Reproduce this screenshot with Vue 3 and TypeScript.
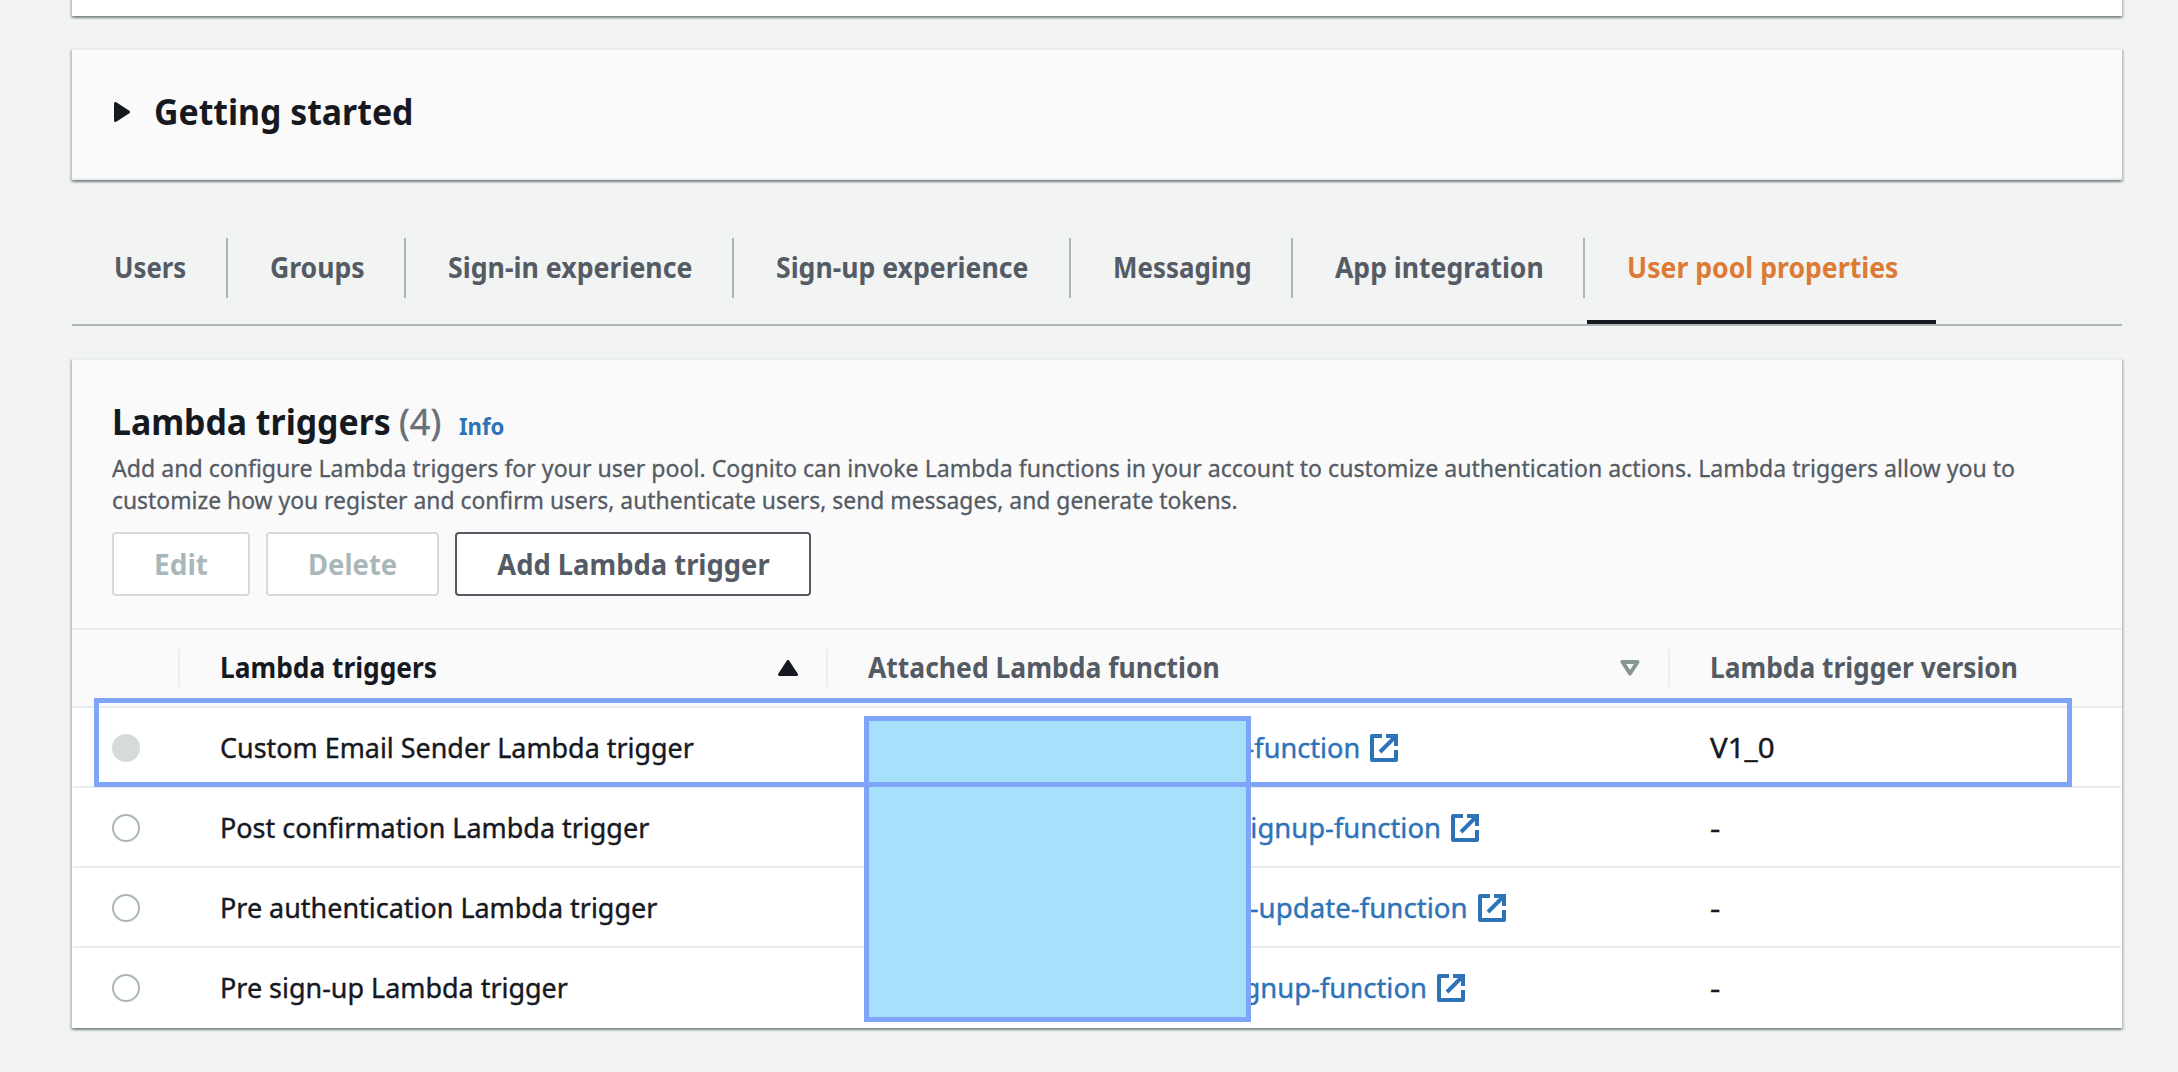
<script setup lang="ts">
interface Tab {
  label: string
  width: number
  fit: number
  active?: boolean
}

interface Trigger {
  name: string
  nameFit: number
  fn: string
  fnFit: number
  fnWidth: number
  version: string
  disabled?: boolean
}

const tabs: Tab[] = [
  { label: 'Users', width: 156, fit: 0.92 },
  { label: 'Groups', width: 178, fit: 0.95 },
  { label: 'Sign-in experience', width: 328, fit: 0.954 },
  { label: 'Sign-up experience', width: 337, fit: 0.95 },
  { label: 'Messaging', width: 222, fit: 0.925 },
  { label: 'App integration', width: 292, fit: 0.948 },
  { label: 'User pool properties', width: 349, fit: 0.951, active: true },
]

const triggers: Trigger[] = [
  { name: 'Custom Email Sender Lambda trigger', nameFit: 0.961, fn: '-function', fnFit: 0.97, fnWidth: 493, version: 'V1_0', disabled: true },
  { name: 'Post confirmation Lambda trigger', nameFit: 0.962, fn: 'signup-function', fnFit: 0.98, fnWidth: 574, version: '-' },
  { name: 'Pre authentication Lambda trigger', nameFit: 0.962, fn: '-update-function', fnFit: 0.988, fnWidth: 601, version: '-' },
  { name: 'Pre sign-up Lambda trigger', nameFit: 0.962, fn: 'signup-function', fnFit: 0.98, fnWidth: 560, version: '-' },
]
</script>

<template>
  <main class="page">
    <section class="card stub"></section>

    <section class="card getting-started">
      <svg class="caret" viewBox="0 0 16 20"><path d="M1.5 1.5V18.5L14.5 10Z" /></svg>
      <h2 class="fit title started-title">Getting started</h2>
    </section>

    <nav class="tabs">
      <a
        v-for="tab in tabs"
        :key="tab.label"
        class="tab"
        :class="{ active: tab.active }"
        :style="{ width: tab.width + 'px' }"
      >
        <span class="fit" :style="{ '--fit': tab.fit }">{{ tab.label }}</span>
      </a>
    </nav>

    <section class="card triggers">
      <header class="head">
        <div class="heading">
          <h2 class="fit title heading-title">Lambda triggers</h2>
          <span class="count">(4)</span>
          <a class="fit info">Info</a>
        </div>
        <p class="desc">
          <span class="fit line-one">Add and configure Lambda triggers for your user pool. Cognito can invoke Lambda functions in your account to customize authentication actions. Lambda triggers allow you to</span>
          <span class="fit line-two">customize how you register and confirm users, authenticate users, send messages, and generate tokens.</span>
        </p>
        <div class="actions">
          <button class="btn edit" disabled><span>Edit</span></button>
          <button class="btn delete" disabled><span>Delete</span></button>
          <button class="btn add"><span>Add Lambda trigger</span></button>
        </div>
      </header>

      <div class="row thead">
        <div class="cell"></div>
        <div class="cell sorted">
          <span class="fit">Lambda triggers</span>
          <svg class="sort" viewBox="0 0 20 16"><path class="solid" d="M10 1.5L18.5 14.5H1.5Z" /></svg>
        </div>
        <div class="cell">
          <span class="fit attached">Attached Lambda function</span>
          <svg class="sort" viewBox="0 0 20 16"><path class="hollow" d="M2.5 2H17.5L10 13.5Z" /></svg>
        </div>
        <div class="cell"><span class="fit">Lambda trigger version</span></div>
      </div>

      <div v-for="t in triggers" :key="t.name" class="row">
        <div class="pick"><span class="radio" :class="{ disabled: t.disabled }"></span></div>
        <div class="value"><span class="fit" :style="{ '--fit': t.nameFit }">{{ t.name }}</span></div>
        <div class="value">
          <a class="link">
            <span class="fn" :style="{ width: t.fnWidth + 'px' }"><span class="fit from-end" :style="{ '--fit': t.fnFit }">{{ t.fn }}</span></span>
            <svg class="external" viewBox="0 0 28 28">
              <path stroke-linejoin="round" d="M12 2H2V26H26V16" />
              <path d="M16 2H26V12M25.5 2.5L10 18" />
            </svg>
          </a>
        </div>
        <div class="value"><span class="fit" :class="{ version: t.version !== '-', dash: t.version === '-' }">{{ t.version }}</span></div>
      </div>

      <div class="redaction"></div>
      <div class="highlight"></div>
    </section>
  </main>
</template>

<style>
body {
  margin: 0;
  background: #f2f3f3;
}
</style>

<style scoped>
.page {
  box-sizing: border-box;
  width: 2178px;
  height: 1072px;
  padding: 0 56px 0 72px;
  overflow: hidden;
  background: #f2f3f3;
  color: #16191f;
  font: 400 28px/32px "Noto Sans", "Open Sans", sans-serif;
}

.card {
  box-sizing: border-box;
  background: #fff;
  border-top: 2px solid #eaeded;
  box-shadow:
    0 2px 2px 0 rgba(0, 28, 36, 0.3),
    2px 2px 2px 0 rgba(0, 28, 36, 0.15),
    -2px 2px 2px 0 rgba(0, 28, 36, 0.15);
}

.stub {
  height: 28px;
  margin-top: -12px;
  border-top: 0;
}

/* Text condensed horizontally from its leading edge */
.fit {
  display: inline-block;
  white-space: nowrap;
  transform: scaleX(var(--fit, 0.94));
  transform-origin: 0 50%;
}

.from-end {
  transform-origin: 100% 50%;
}

.title {
  margin: 0;
  font-size: 36px;
  font-weight: 700;
  line-height: 44px;
}

.getting-started {
  display: flex;
  align-items: center;
  height: 132px;
  margin-top: 32px;
  padding-left: 42px;
  border-bottom: 2px solid #eaeded;
  background: #fafafa;
}

.caret {
  width: 16px;
  height: 20px;
  margin-top: -4px;
  fill: #16191f;
  stroke: #16191f;
  stroke-width: 3;
  stroke-linejoin: round;
}

.started-title {
  --fit: 0.939;
  margin: -4px 0 0 24px;
}

.tabs {
  box-sizing: border-box;
  display: flex;
  height: 88px;
  margin-top: 58px;
  border-bottom: 2px solid #aab7b8;
}

.tab {
  box-sizing: border-box;
  height: 60px;
  padding-left: 42px;
  border-right: 2px solid #aab7b8;
  color: #545b64;
  font-weight: 700;
  line-height: 59px;
}

.tab.active {
  height: 86px;
  margin-left: 2px;
  padding-left: 40px;
  border-right: 0;
  border-bottom: 4px solid #16191f;
  color: #dd7a33;
}

.triggers {
  position: relative;
  height: 670px;
  margin-top: 32px;
}

.head {
  box-sizing: border-box;
  height: 270px;
  padding: 40px 40px 32px;
  border-bottom: 2px solid #eaeded;
  background: #fafafa;
}

.heading {
  display: flex;
  align-items: baseline;
  height: 44px;
}

.heading-title {
  --fit: 0.939;
  width: 287px;
}

.count {
  width: 57px;
  color: #687078;
  font-size: 36px;
  line-height: 44px;
  -webkit-text-stroke: 0.4px currentColor;
}

.info {
  --fit: 0.923;
  margin-left: 3px;
  color: #2e73b8;
  font-size: 24px;
  font-weight: 700;
}

.desc {
  display: flex;
  flex-direction: column;
  margin: 8px 0 16px;
  color: #545b64;
  font-size: 24px;
  line-height: 32px;
  -webkit-text-stroke: 0.3px currentColor;
}

.line-one {
  --fit: 0.9625;
}

.line-two {
  --fit: 0.953;
}

.actions {
  display: flex;
  gap: 16px;
}

.btn {
  box-sizing: border-box;
  height: 64px;
  padding: 0;
  border: 2px solid #545b64;
  border-radius: 4px;
  background: #fff;
  color: #545b64;
  font: 700 28px/58px "Noto Sans", "Open Sans", sans-serif;
  text-align: center;
  white-space: nowrap;
}

.btn span {
  display: inline-block;
}

.btn:disabled {
  border-color: #d5dbdb;
  color: #aab7b8;
}

.edit {
  width: 138px;
}

.delete {
  width: 173px;
}

.delete span {
  transform: scaleX(0.978);
}

.add {
  width: 356px;
}

.add span {
  transform: scaleX(0.977);
}

.row {
  box-sizing: border-box;
  display: grid;
  grid-template-columns: 108px 648px 842px 452px;
  align-items: center;
  height: 80px;
  padding-top: 2px;
  border-bottom: 2px solid #eaeded;
}

.row:not(.thead) {
  grid-template-columns: 107px 648px 842px 451px;
  margin: 0 1px;
}

.row:nth-last-child(3) {
  padding-bottom: 2px;
  border-bottom: 0;
}

.row.thead {
  height: 78px;
  padding-top: 0;
  background: #fafafa;
  color: #545b64;
  font-weight: 700;
}

.cell {
  box-sizing: border-box;
  display: flex;
  align-items: center;
  justify-content: space-between;
  height: 38px;
  padding: 0 28px 2px 40px;
  border-right: 2px solid #eaeded;
}

.cell:last-child {
  border-right: 0;
}

.sorted {
  color: #16191f;
}

.attached {
  --fit: 0.946;
}

.sort {
  width: 20px;
  height: 16px;
  margin-top: 2px;
}

.solid {
  fill: #16191f;
  stroke: #16191f;
  stroke-width: 3;
  stroke-linejoin: round;
}

.hollow {
  fill: none;
  stroke: #879596;
  stroke-width: 4;
  stroke-linejoin: round;
}

.pick {
  display: flex;
  padding-left: 39px;
}

.radio {
  box-sizing: border-box;
  width: 28px;
  height: 28px;
  border: 2px solid #aab7b8;
  border-radius: 50%;
  background: #fff;
}

.radio.disabled {
  border-color: #d5dbdb;
  background: #d5dbdb;
}

.value {
  padding: 0 0 2px 40px;
  -webkit-text-stroke: 0.4px currentColor;
}

.version {
  --fit: 1.054;
}

.dash {
  --fit: 1.15;
}

.link {
  display: flex;
  align-items: center;
  color: #2e73b8;
}

.fn {
  margin: 0 10px 0 -1px;
  text-align: right;
}

.external {
  width: 28px;
  height: 28px;
  margin-top: 2px;
  fill: none;
  stroke: #2e73b8;
  stroke-width: 4;
}

/* Annotations drawn over the table */
.redaction,
.highlight {
  position: absolute;
  box-sizing: border-box;
  border: 5px solid #7fa5fb;
}

.redaction {
  top: 356px;
  left: 792px;
  width: 387px;
  height: 306px;
  background: #a6e0fb;
}

.highlight {
  top: 338px;
  left: 22px;
  width: 1978px;
  height: 89px;
}
</style>
